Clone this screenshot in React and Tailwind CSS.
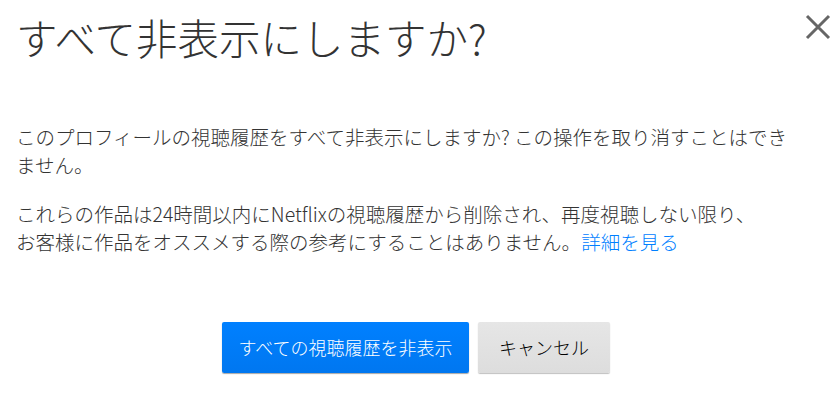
import React from 'react';

const CloseIcon = () => (
  <svg width="26" height="26" viewBox="0 0 26 26" fill="none">
    <path d="M2 2 L24 24 M24 2 L2 24" stroke="#666666" strokeWidth="3" />
  </svg>
);

const HideAllDialog = () => {
  return (
    <div className="relative w-[840px] h-[417px] bg-white text-[#333333] font-['Noto_Sans_CJK_JP','Noto_Sans',sans-serif] overflow-hidden">
      <button className="absolute top-[14px] right-[9px] p-0 bg-transparent" aria-label="閉じる">
        <CloseIcon />
      </button>

      <div className="pl-[16px] pt-[13px]">
        <h1 className="text-[41.5px] leading-[48px] font-light">すべて非表示にしますか?</h1>

        <div className="mt-[62px] w-[784px] text-[19.5px] leading-[27.5px] font-light">
          <p>このプロフィールの視聴履歴をすべて非表示にしますか? この操作を取り消すことはできません。</p>
          <p className="mt-[22px]">
            これらの作品は24時間以内にNetflixの視聴履歴から削除され、再度視聴しない限り、
            <br />
            お客様に作品をオススメする際の参考にすることはありません。<a href="#" className="text-[#0080ff]">詳細を見る</a>
          </p>
        </div>
      </div>

      <div className="flex justify-center gap-[9px] mt-[67px] pr-[8px]">
        <button className="h-[51px] w-[247px] rounded-[2px] bg-gradient-to-b from-[#0080ff] to-[#0077f0] text-white text-[18px] font-light shadow-[0_1px_1px_rgba(0,0,0,0.35)]">
          すべての視聴履歴を非表示
        </button>
        <button className="h-[51px] w-[132px] rounded-[2px] bg-gradient-to-b from-[#e6e6e6] to-[#dddddd] text-black text-[18px] font-light shadow-[0_1px_1px_rgba(0,0,0,0.25)]">
          キャンセル
        </button>
      </div>
    </div>
  );
};

export default function App() {
  return <HideAllDialog />;
}
